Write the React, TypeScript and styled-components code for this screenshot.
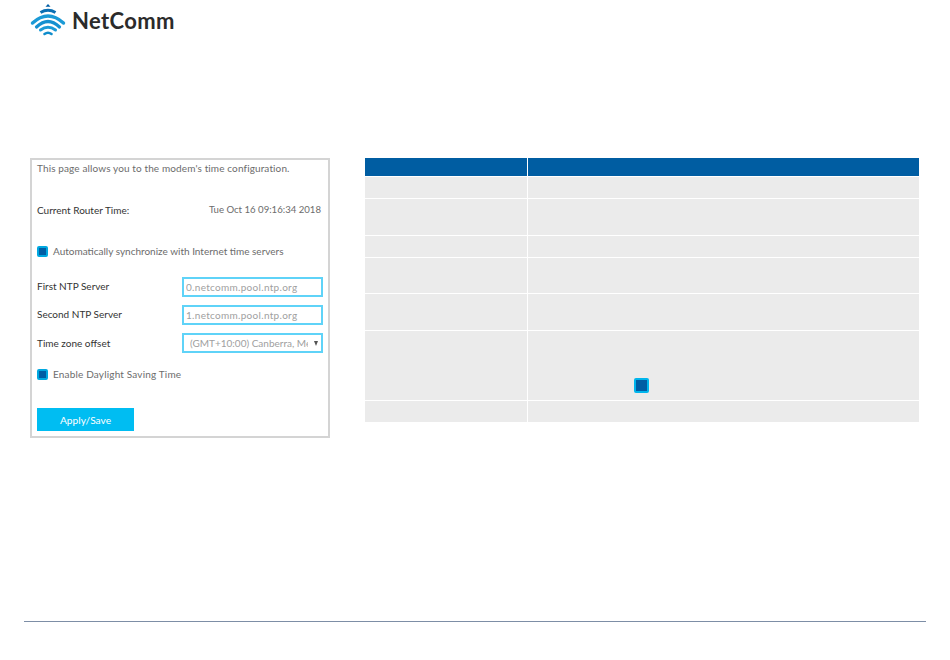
import styled, { createGlobalStyle } from "styled-components";

const GlobalStyle = createGlobalStyle`
    html, body {
        margin: 0;
        padding: 0;
        background: #fff;
        font-family: "Lato", "Liberation Sans", sans-serif;
    }
`;

const Page = styled.div`
    width: 950px;
    height: 660px;
    display: flex;
    flex-direction: column;
    overflow: hidden;
`;

const Header = styled.header`
    height: 158px;
    padding: 3px 0 0 30px;
    box-sizing: border-box;
    display: flex;
    align-items: flex-start;
    gap: 6px;
`;

const LogoText = styled.span`
    font-size: 22px;
    font-weight: 700;
    line-height: 24px;
    margin-top: 6px;
    color: #2b2b2b;
    letter-spacing: 0.35px;
`;

const Main = styled.main`
    display: flex;
    align-items: flex-start;
    padding-left: 30px;
    gap: 35px;
`;

const Panel = styled.section`
    width: 300px;
    height: 280px;
    box-sizing: border-box;
    border: 2px solid #d4d4d4;
    padding: 1px 5px 0 5px;
    display: flex;
    flex-direction: column;
    font-size: 10px;
    color: #6c6c6c;
`;

const Line = styled.div<{ $top?: number }>`
    display: flex;
    align-items: center;
    justify-content: space-between;
    min-height: 14px;
    line-height: 14px;
    margin-top: ${(p) => p.$top ?? 0}px;
`;

const Intro = styled(Line)`
    letter-spacing: 0.12px;
`;

const Label = styled.span`
    color: #333;
`;

const FieldLabel = styled(Label)`
    margin-bottom: 2px;
`;

const TimeValue = styled.span`
    font-size: 9.6px;
    margin-right: 2px;
`;

const CheckLine = styled(Line)<{ $spacing?: number }>`
    justify-content: flex-start;
    gap: 5px;
    letter-spacing: ${(p) => p.$spacing ?? 0}px;
`;

const Check = styled.span<{ $size?: number }>`
    width: ${(p) => p.$size ?? 11}px;
    height: ${(p) => p.$size ?? 11}px;
    box-sizing: border-box;
    border: 2px solid #00a8e0;
    border-radius: 2px;
    background: #005da4;
    flex: none;
`;

const TextField = styled.input`
    width: 141px;
    height: 20px;
    box-sizing: border-box;
    border: 2px solid #5fd3f8;
    padding: 0 2px;
    margin: 0;
    font: inherit;
    letter-spacing: 0.3px;
    color: #a0a0a0;
    outline: none;
    background: #fff;
`;

const SelectWrap = styled.div`
    position: relative;
    width: 141px;
    height: 20px;
`;

const Select = styled.select`
    width: 100%;
    height: 100%;
    box-sizing: border-box;
    border: 2px solid #5fd3f8;
    padding: 0 13px 0 6px;
    margin: 0;
    font: inherit;
    color: #a0a0a0;
    background: #fff;
    appearance: none;
    outline: none;
`;

const Arrow = styled.span`
    position: absolute;
    top: 8px;
    right: 5px;
    width: 0;
    height: 0;
    border-left: 2.5px solid transparent;
    border-right: 2.5px solid transparent;
    border-top: 5px solid #555;
`;

const ApplyButton = styled.button`
    width: 97px;
    height: 23px;
    margin-top: 27px;
    padding: 0;
    border: none;
    background: #00bdf2;
    color: #fff;
    font: inherit;
    font-size: 10.2px;
`;

const Table = styled.div`
    width: 554px;
    display: grid;
    grid-template-columns: 162px 391px;
    column-gap: 1px;
    row-gap: 1px;
`;

const HeadCell = styled.div`
    height: 18px;
    background: #005da2;
`;

const Cell = styled.div<{ $h: number }>`
    height: ${(p) => p.$h}px;
    background: #ebebeb;
    display: flex;
    align-items: flex-end;
`;

const CellCheck = styled(Check)`
    margin: 0 0 7px 106px;
    border-color: #00b5ec;
`;

const Footer = styled.footer`
    margin: auto 24px 38px;
    height: 1px;
    background: #7d8ea6;
`;

const rowHeights = [21, 36, 21, 35, 36, 69, 21];

const LogoMark = () => (
    <svg width="36" height="34" viewBox="0 0 36 34" fill="none">
        <path d="M18 1 L20.5 3.8 H15.5 Z" fill="#005da4" />
        <path d="M10.5 9.5 Q18 5 25.5 9.5" stroke="#0b6fb3" strokeWidth="3" />
        <path d="M2.5 20 Q18 6 33.5 20" stroke="#1b9ad6" strokeWidth="3.4" strokeLinecap="round" />
        <path d="M6.5 24 Q18 13 29.5 24" stroke="#1590d0" strokeWidth="3.2" strokeLinecap="round" />
        <path d="M10.5 27 Q18 21.5 25.5 27" stroke="#1b9ad6" strokeWidth="3" strokeLinecap="round" />
        <path d="M14.5 31 Q18 28.5 21.5 31" stroke="#0f8ccb" strokeWidth="2.6" strokeLinecap="round" />
    </svg>
);

export default function App() {
    return (
        <Page>
            <GlobalStyle />
            <Header>
                <LogoMark />
                <LogoText>NetComm</LogoText>
            </Header>
            <Main>
                <Panel>
                    <Intro>This page allows you to the modem's time configuration.</Intro>
                    <Line $top={28}>
                        <Label>Current Router Time:</Label>
                        <TimeValue>Tue Oct 16 09:16:34 2018</TimeValue>
                    </Line>
                    <CheckLine $top={27}>
                        <Check />
                        Automatically synchronize with Internet time servers
                    </CheckLine>
                    <Line $top={19}>
                        <FieldLabel>First NTP Server</FieldLabel>
                        <TextField readOnly value="0.netcomm.pool.ntp.org" />
                    </Line>
                    <Line $top={8}>
                        <FieldLabel>Second NTP Server</FieldLabel>
                        <TextField readOnly value="1.netcomm.pool.ntp.org" />
                    </Line>
                    <Line $top={8}>
                        <Label>Time zone offset</Label>
                        <SelectWrap>
                            <Select defaultValue="syd">
                                <option value="syd">(GMT+10:00) Canberra, Melbourne, Sydney</option>
                            </Select>
                            <Arrow />
                        </SelectWrap>
                    </Line>
                    <CheckLine $top={14} $spacing={0.17}>
                        <Check />
                        Enable Daylight Saving Time
                    </CheckLine>
                    <ApplyButton>Apply/Save</ApplyButton>
                </Panel>
                <Table>
                    <HeadCell />
                    <HeadCell />
                    {rowHeights.map((h, i) => [
                        <Cell key={`a${i}`} $h={h} />,
                        <Cell key={`b${i}`} $h={h}>
                            {i === 5 && <CellCheck $size={15} />}
                        </Cell>,
                    ])}
                </Table>
            </Main>
            <Footer />
        </Page>
    );
}
